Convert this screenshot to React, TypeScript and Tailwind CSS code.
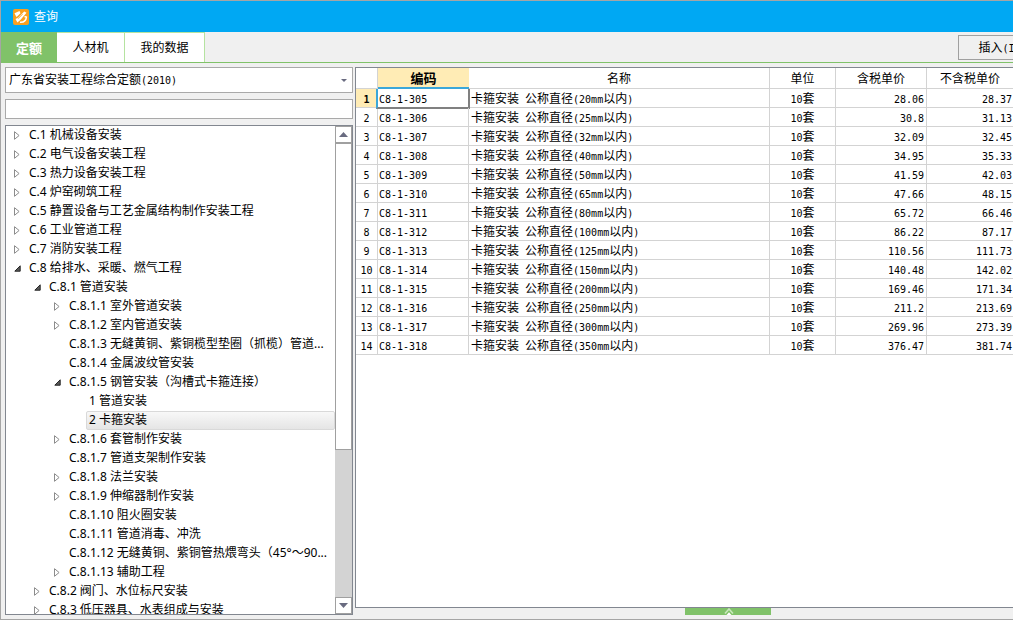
import React from "react";

type Node = { level: 0 | 1 | 2 | 3; text: string; state?: "open" | "closed"; selected?: boolean };

const nodes: Node[] = [
  { level: 0, text: "C.1 机械设备安装", state: "closed" },
  { level: 0, text: "C.2 电气设备安装工程", state: "closed" },
  { level: 0, text: "C.3 热力设备安装工程", state: "closed" },
  { level: 0, text: "C.4 炉窑砌筑工程", state: "closed" },
  { level: 0, text: "C.5 静置设备与工艺金属结构制作安装工程", state: "closed" },
  { level: 0, text: "C.6 工业管道工程", state: "closed" },
  { level: 0, text: "C.7 消防安装工程", state: "closed" },
  { level: 0, text: "C.8 给排水、采暖、燃气工程", state: "open" },
  { level: 1, text: "C.8.1 管道安装", state: "open" },
  { level: 2, text: "C.8.1.1 室外管道安装", state: "closed" },
  { level: 2, text: "C.8.1.2 室内管道安装", state: "closed" },
  { level: 2, text: "C.8.1.3 无缝黄铜、紫铜榄型垫圈（抓榄）管道..." },
  { level: 2, text: "C.8.1.4 金属波纹管安装" },
  { level: 2, text: "C.8.1.5 钢管安装（沟槽式卡箍连接）", state: "open" },
  { level: 3, text: "1 管道安装" },
  { level: 3, text: "2 卡箍安装", selected: true },
  { level: 2, text: "C.8.1.6 套管制作安装", state: "closed" },
  { level: 2, text: "C.8.1.7 管道支架制作安装" },
  { level: 2, text: "C.8.1.8 法兰安装", state: "closed" },
  { level: 2, text: "C.8.1.9 伸缩器制作安装", state: "closed" },
  { level: 2, text: "C.8.1.10 阻火圈安装" },
  { level: 2, text: "C.8.1.11 管道消毒、冲洗" },
  { level: 2, text: "C.8.1.12 无缝黄铜、紫铜管热煨弯头（45°～90..." },
  { level: 2, text: "C.8.1.13 辅助工程", state: "closed" },
  { level: 1, text: "C.8.2 阀门、水位标尺安装", state: "closed" },
  { level: 1, text: "C.8.3 低压器具、水表组成与安装", state: "closed" },
];

const indent = ["pl-[2px]", "pl-[22px]", "pl-[42px]", "pl-[62px]"];

const rows: [string, string, string, string][] = [
  ["C8-1-305", "20", "28.06", "28.37"],
  ["C8-1-306", "25", "30.8", "31.13"],
  ["C8-1-307", "32", "32.09", "32.45"],
  ["C8-1-308", "40", "34.95", "35.33"],
  ["C8-1-309", "50", "41.59", "42.03"],
  ["C8-1-310", "65", "47.66", "48.15"],
  ["C8-1-311", "80", "65.72", "66.46"],
  ["C8-1-312", "100", "86.22", "87.17"],
  ["C8-1-313", "125", "110.56", "111.73"],
  ["C8-1-314", "150", "140.48", "142.02"],
  ["C8-1-315", "200", "169.46", "171.34"],
  ["C8-1-316", "250", "211.2", "213.69"],
  ["C8-1-317", "300", "269.96", "273.39"],
  ["C8-1-318", "350", "376.47", "381.74"],
];

/** Sets Latin runs in a half-width monospace beside full-width characters. */
function Mixed({ text }: { text: string }) {
  return (
    <>
      {text.split(/([\x20-\x7e]+)/).filter(Boolean).map((part, i) =>
        /^[\x20-\x7e]/.test(part) ? (
          <span key={i} className="whitespace-pre font-['DejaVu_Sans_Mono',monospace] text-[10px] leading-none">{part}</span>
        ) : (
          <span key={i}>{part}</span>
        ),
      )}
    </>
  );
}

function Arrow({ state }: { state?: "open" | "closed" }) {
  return (
    <span className="flex w-[18px] shrink-0 items-center justify-center">
      {state === "closed" && (
        <svg width="6" height="9" viewBox="0 0 6 9" aria-hidden="true">
          <path d="M.5.7v7.6l4.600-3.800z" fill="#fff" stroke="#8c8c8c" />
        </svg>
      )}
      {state === "open" && (
        <svg width="7" height="7" viewBox="0 0 7 7" aria-hidden="true">
          <path d="M6.2.8v5.4H.8z" fill="#595959" stroke="#262626" />
        </svg>
      )}
    </span>
  );
}

const th = "border-b border-r border-[#d3d3d3] px-0 pb-0 pt-px font-normal";
const td = "border-b border-r border-[#d3d3d3] pb-0 pt-px";

export default function App() {
  return (
    <div className="flex h-screen flex-col overflow-hidden border-b border-l border-t border-[#a5a5a5] bg-[#f0f0f0] font-['Noto_Sans','Noto_Sans_CJK_SC',sans-serif] text-[12px] leading-[18px] text-black">
      <header className="flex h-[31px] shrink-0 items-center gap-[5px] bg-[#00a8f3] pl-3 text-white">
        <svg width="16" height="16" viewBox="0 0 16 16" aria-hidden="true">
          <rect width="16" height="16" rx="2" fill="#f9a01f" />
          <path d="M1.500 4.200 6.500 2l1 2.200-2.600 2.600L3.400 8z" fill="#fff" />
          <path d="m5.400 8.400 5.800-5.900 2.300 1.300-5.900 7-3.200 2.800L2.500 10z" fill="#fff" />
          <path d="m5 9.800 4.600-4.600" fill="none" stroke="#f9a01f" strokeWidth=".8" />
          <path d="m11.500 7.600 1.900.5c-.4 3.400-2.600 5.400-6.400 5.100" fill="none" stroke="#fff" strokeWidth="1.500" />
        </svg>
        <h1>查询</h1>
      </header>

      <nav className="flex h-[31px] shrink-0 border-b border-[#80c269]">
        <button className="w-14 bg-[#80c269] pt-px text-[13px] font-bold text-white">定额</button>
        <button className="w-[68px] border-r border-t border-[#b5e3a0] bg-white pt-px">人材机</button>
        <button className="w-20 border-r border-t border-[#b5e3a0] bg-white pt-px">我的数据</button>
        <button className="-mr-6 ml-auto mt-[3px] h-[25px] w-[79px] shrink-0 border border-[#a0a0a0] pl-1">
          <Mixed text="插入(I)" />
        </button>
      </nav>

      <main className="flex min-h-0 flex-1 pb-1 pl-1 pt-1">
        <aside className="flex w-[348px] shrink-0 flex-col">
          <div className="relative h-[26px] shrink-0 border border-[#a9a9a9] bg-white px-[3px]">
            <span className="pointer-events-none block leading-6" aria-hidden="true">
              <Mixed text="广东省安装工程综合定额(2010)" />
            </span>
            <select aria-label="定额库" className="absolute inset-0 h-full w-full cursor-pointer opacity-0">
              <option>广东省安装工程综合定额(2010)</option>
            </select>
            <svg className="pointer-events-none absolute right-[5px] top-[11px]" width="6" height="3" viewBox="0 0 6 3" aria-hidden="true">
              <path d="M0 0h6L3 3z" fill="#696b80" />
            </svg>
          </div>
          <input aria-label="搜索" className="mt-[6px] h-5 shrink-0 border border-[#a9a9a9] bg-white px-1 outline-none" />
          <div className="mt-[6px] flex min-h-0 flex-1 border border-[#828790] bg-white">
            <ul role="tree" className="min-w-0 flex-1 overflow-hidden">
              {nodes.map((n) => (
                <li key={n.text} role="treeitem" aria-selected={!!n.selected} className={`flex h-[19px] ${indent[n.level]}`}>
                  <Arrow state={n.state} />
                  {n.selected ? (
                    <span className="flex-1 rounded-[2px] border border-[#d9d9d9] bg-linear-to-b from-[#f8f8f8] to-[#e5e5e5] pl-[2px] leading-[15px]">{n.text}</span>
                  ) : (
                    <span className="truncate pl-[3px] leading-[17px]">{n.text}</span>
                  )}
                </li>
              ))}
            </ul>
            <div className="flex w-[17px] shrink-0 flex-col bg-[#d3d3d3]">
              <button aria-label="向上滚动" className="flex h-[17px] shrink-0 items-center justify-center border border-[#a0a0a0] bg-white">
                <svg width="9" height="5" viewBox="0 0 9 5" aria-hidden="true"><path d="M4.5 0 9 5H0z" fill="#696b80" /></svg>
              </button>
              <div className="h-[63%] border border-[#a0a0a0] bg-white" />
              <button aria-label="向下滚动" className="mt-auto flex h-[17px] shrink-0 items-center justify-center border border-[#a0a0a0] bg-white">
                <svg width="9" height="5" viewBox="0 0 9 5" aria-hidden="true"><path d="M0 0h9L4.5 5z" fill="#696b80" /></svg>
              </button>
            </div>
          </div>
        </aside>

        <section className="ml-[2px] flex min-w-0 flex-1 flex-col">
          <div className="min-h-0 flex-1 overflow-hidden border-b border-l border-t border-[#828790] bg-white">
            <table className="w-full table-fixed border-separate border-spacing-0 leading-[17px]">
              <colgroup>
                <col className="w-[22px]" />
                <col className="w-[91px]" />
                <col className="w-[301px]" />
                <col className="w-[66px]" />
                <col className="w-[91px]" />
                <col />
              </colgroup>
              <thead>
                <tr className="h-[21px]">
                  <th className={th} />
                  <th className="border-b-2 border-[#3ba7d9] bg-[#ffecb5] px-0 pb-0 pt-[2px] text-[13px] font-bold">编码</th>
                  <th className={th}>名称</th>
                  <th className={th}>单位</th>
                  <th className={th}>含税单价</th>
                  <th className="border-b border-[#d3d3d3] px-0 pb-0 pt-px font-normal">不含税单价</th>
                </tr>
              </thead>
              <tbody>
                {rows.map(([code, size, taxed, net], i) => (
                  <tr key={code} className="h-[19px]">
                    <th className={i === 0 ? "border-b border-r border-[#d3d3d3] bg-[#ffecb5] px-0 pb-0 pt-px font-bold" : th}>
                      <Mixed text={String(i + 1)} />
                    </th>
                    <td className={`relative pl-px ${td}`}>
                      <Mixed text={code} />
                      {i === 0 && (
                        <span className="absolute -bottom-[2px] -left-[2px] -right-[2px] top-0 border-b-2 border-l-2 border-r-2 border-b-[#808080] border-l-[#3ba7d9] border-r-[#808080]" />
                      )}
                    </td>
                    <td className={`pl-[2px] ${td}`}>
                      <Mixed text={`卡箍安装 公称直径(${size}mm以内)`} />
                    </td>
                    <td className={`text-center ${td}`}>
                      <Mixed text="10套" />
                    </td>
                    <td className={`pr-[2px] text-right ${td}`}>
                      <Mixed text={taxed} />
                    </td>
                    <td className="border-b border-[#d3d3d3] pb-0 pt-px pr-px text-right">
                      <Mixed text={net} />
                    </td>
                  </tr>
                ))}
              </tbody>
            </table>
          </div>
          <button aria-label="展开" className="ml-[330px] flex h-[7px] w-[86px] shrink-0 items-center justify-center bg-[#80c269] pl-[2px]">
            <svg width="10" height="7" viewBox="0 0 10 7" aria-hidden="true">
              <path d="M1 5.5 5 1l4 4.500" fill="none" stroke="#c9e8bd" strokeWidth="1.600" />
              <path d="M2.500 7 5 4.200 7.500 7z" fill="#fff" />
            </svg>
          </button>
        </section>
      </main>
    </div>
  );
}
